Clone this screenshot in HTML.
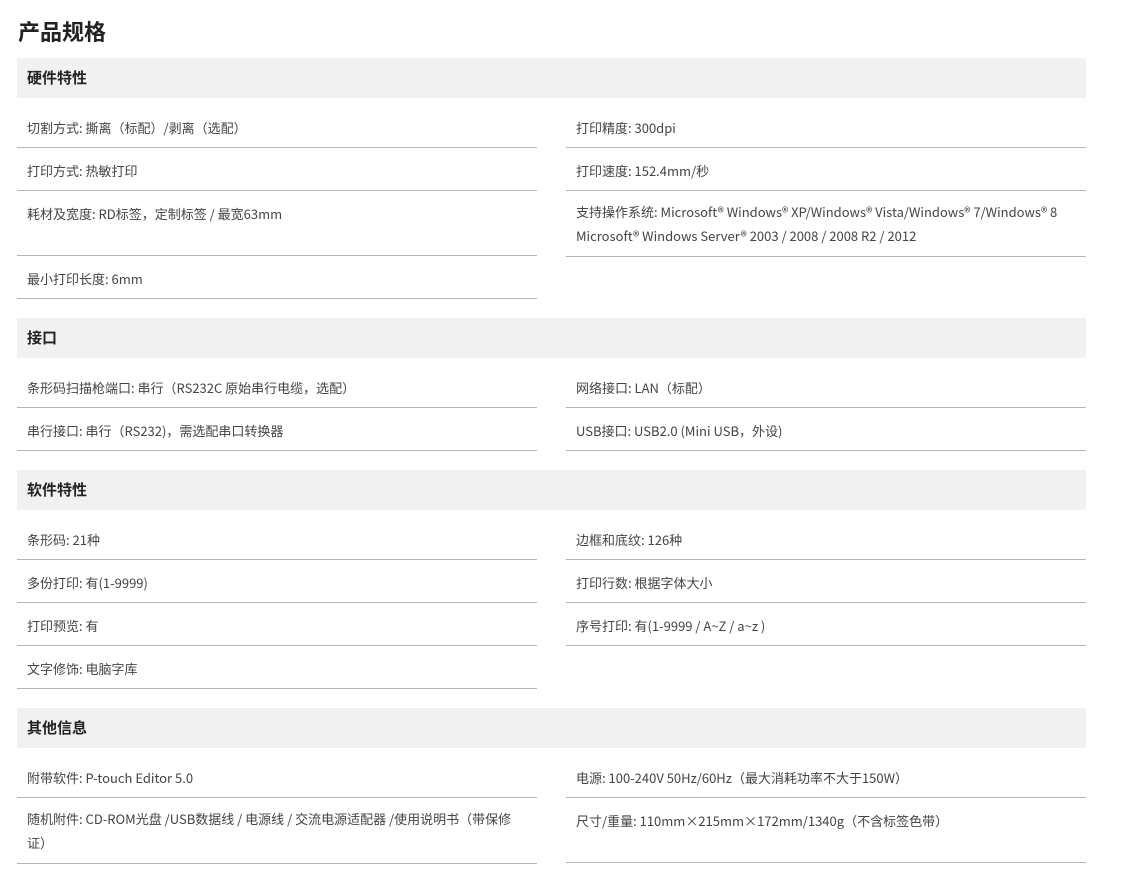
<!DOCTYPE html>
<html><head><meta charset="utf-8"><style>
body{margin:0;background:#fff;font-family:"Noto Sans CJK SC","Liberation Sans",sans-serif;color:#444;}
.wrap{position:absolute;left:17px;top:0;width:1069px;}
h1{margin:0;height:58px;line-height:62px;font-size:22px;font-weight:bold;color:#222;padding-left:1px;}
.hd{height:40px;line-height:40px;background:#f1f1f1;font-size:15px;font-weight:bold;color:#222;padding-left:10px;margin-bottom:7px;}
.sec{display:flex;justify-content:space-between;margin-bottom:19px;}
.col{width:520px;}
.r{padding:12px 10px 8px;line-height:22px;font-size:13px;border-bottom:1px solid #b5b5b5;}
.m{padding:9px 10px 8px;line-height:24px;}
</style></head><body><div class="wrap">
<h1>产品规格</h1>
<div class="hd">硬件特性</div>
<div class="sec"><div class="col">
<div class="r">切割方式: 撕离（标配）/剥离（选配）</div>
<div class="r">打印方式: 热敏打印</div>
<div class="r" style="padding-bottom:30px">耗材及宽度: RD标签，定制标签 / 最宽63mm</div>
<div class="r">最小打印长度: 6mm</div>
</div><div class="col">
<div class="r">打印精度: 300dpi</div>
<div class="r">打印速度: 152.4mm/秒</div>
<div class="r m">支持操作系统: Microsoft® Windows® XP/Windows® Vista/Windows® 7/Windows® 8 Microsoft® Windows Server® 2003 / 2008 / 2008 R2 / 2012</div>
</div></div>
<div class="hd">接口</div>
<div class="sec"><div class="col">
<div class="r">条形码扫描枪端口: 串行（RS232C 原始串行电缆，选配）</div>
<div class="r">串行接口: 串行（RS232)，需选配串口转换器</div>
</div><div class="col">
<div class="r">网络接口: LAN（标配）</div>
<div class="r">USB接口: USB2.0 (Mini USB，外设)</div>
</div></div>
<div class="hd">软件特性</div>
<div class="sec"><div class="col">
<div class="r">条形码: 21种</div>
<div class="r">多份打印: 有(1-9999)</div>
<div class="r">打印预览: 有</div>
<div class="r">文字修饰: 电脑字库</div>
</div><div class="col">
<div class="r">边框和底纹: 126种</div>
<div class="r">打印行数: 根据字体大小</div>
<div class="r">序号打印: 有(1-9999 / A~Z / a~z )</div>
</div></div>
<div class="hd">其他信息</div>
<div class="sec"><div class="col">
<div class="r">附带软件: P-touch Editor 5.0</div>
<div class="r m">随机附件: CD-ROM光盘 /USB数据线 / 电源线 / 交流电源适配器 /使用说明书（带保修证）</div>
</div><div class="col">
<div class="r">电源: 100-240V 50Hz/60Hz（最大消耗功率不大于150W）</div>
<div class="r" style="padding-bottom:30px">尺寸/重量: 110mm×215mm×172mm/1340g（不含标签色带）</div>
</div></div>
</div></body></html>
